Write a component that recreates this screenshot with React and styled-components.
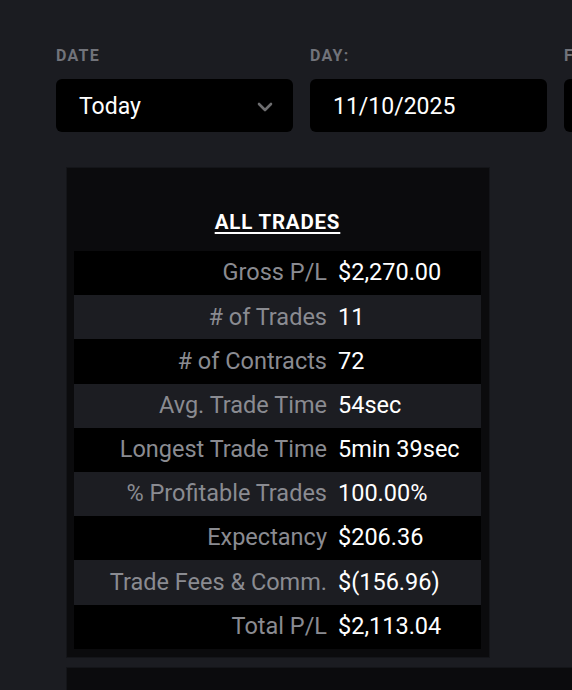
import React from 'react'
import styled, { createGlobalStyle } from 'styled-components'

const GlobalStyle = createGlobalStyle`
  html, body {
    margin: 0;
    padding: 0;
    overflow: hidden;
    background: #1b1c21;
  }
  body {
    font-family: Roboto, "Liberation Sans", Arial, sans-serif;
  }
`

const Page = styled.div`
  padding: 47px 0 0 56px;
  width: 800px;
`

const Filters = styled.div`
  display: flex;
  gap: 17px;
`

const Field = styled.div`
  width: 237px;
  display: flex;
  flex-direction: column;
  gap: 14px;
`

const FieldLabel = styled.label`
  font-size: 16px;
  line-height: 18px;
  font-weight: 700;
  letter-spacing: 1.3px;
  color: #71737a;
  text-transform: uppercase;
`

const Control = styled.div`
  height: 53px;
  box-sizing: border-box;
  background: #000;
  border-radius: 6px;
  display: flex;
  align-items: center;
  justify-content: space-between;
  padding: 2px 20px 0 23px;
  color: #fff;
  font-size: 23px;
`

const Chevron = () => (
  <svg width="16" height="10" viewBox="0 0 16 10" fill="none">
    <path d="M2 2l6 6 6-6" stroke="#6e6e70" strokeWidth="2.6" strokeLinecap="round" strokeLinejoin="round" />
  </svg>
)

const Card = styled.section`
  margin: 35px 0 0 10px;
  width: ${p => p.$width || '424px'};
  box-sizing: border-box;
  background: #0b0b0d;
  border: 1px solid #141519;
  padding: 7px 8px 8px 7px;
  min-height: ${p => p.$minHeight || 'auto'};
  ${p => p.$tight && 'margin-top: 9px;'}
`

const Title = styled.h2`
  margin: 0 0 17px;
  padding-top: 35px;
  text-align: center;
  font-size: 20.5px;
  line-height: 24px;
  font-weight: 700;
  letter-spacing: 0.8px;
  color: #fff;
  text-decoration: underline;
  text-underline-offset: 3px;
  text-decoration-thickness: 2px;
`

const Row = styled.div`
  display: grid;
  grid-template-columns: 264px 1fr;
  align-items: center;
  height: 44.2px;
  background: ${p => (p.$alt ? '#1c1d22' : '#000')};
  font-size: 23.5px;
  line-height: 1;
`

const Key = styled.span`
  text-align: right;
  padding-right: 11px;
  color: #8a8b91;
`

const Value = styled.span`
  color: #fff;
`

const stats = [
  ['Gross P/L', '$2,270.00'],
  ['# of Trades', '11'],
  ['# of Contracts', '72'],
  ['Avg. Trade Time', '54sec'],
  ['Longest Trade Time', '5min 39sec'],
  ['% Profitable Trades', '100.00%'],
  ['Expectancy', '$206.36'],
  ['Trade Fees & Comm.', '$(156.96)'],
  ['Total P/L', '$2,113.04'],
]

export default function App() {
  return (
    <>
      <GlobalStyle />
      <Page>
        <Filters>
          <Field>
            <FieldLabel>Date</FieldLabel>
            <Control>
              Today
              <Chevron />
            </Control>
          </Field>
          <Field>
            <FieldLabel>Day:</FieldLabel>
            <Control>11/10/2025</Control>
          </Field>
          <Field>
            <FieldLabel>From:</FieldLabel>
            <Control />
          </Field>
        </Filters>

        <Card>
          <Title>ALL TRADES</Title>
          {stats.map(([k, v], i) => (
            <Row key={k} $alt={i % 2 === 1}>
              <Key>{k}</Key>
              <Value>{v}</Value>
            </Row>
          ))}
        </Card>

        <Card $tight $width="700px" $minHeight="200px" />
      </Page>
    </>
  )
}
